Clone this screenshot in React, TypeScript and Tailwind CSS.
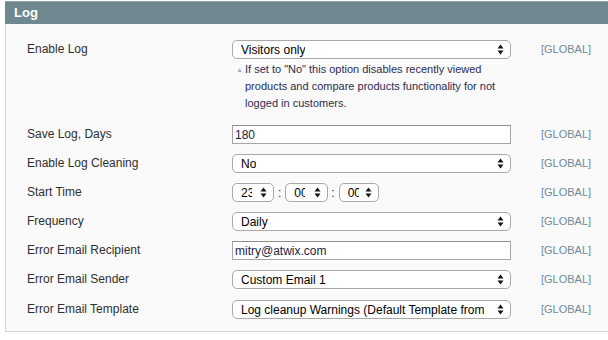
import React from "react";

const font = { fontFamily: '"Liberation Sans", Arial, sans-serif' };

function Arrows() {
  return (
    <svg width="7" height="11" viewBox="0 0 7 11" className="shrink-0">
      <path d="M3.5 0.5 L6.5 4.5 L0.5 4.5 Z" fill="#111" />
      <path d="M3.5 10.5 L6.5 6.5 L0.5 6.5 Z" fill="#111" />
    </svg>
  );
}

function Select({ value }: { value: string }) {
  return (
    <div className="flex h-[19px] w-[279px] items-center justify-between rounded-[5px] border border-[#a9a9a9] bg-white pl-[8px] pr-[6px] text-[12px] text-black">
      <span className="truncate">{value}</span>
      <Arrows />
    </div>
  );
}

function TimeSelect({ value, box }: { value: string; box: string }) {
  return (
    <div className={"flex h-[19px] items-center justify-between rounded-[5px] border border-[#a9a9a9] bg-white pl-[8px] pr-[6px] text-[12px] text-black " + box}>
      <span className="w-[11px] overflow-hidden whitespace-nowrap">{value}</span>
      <Arrows />
    </div>
  );
}

function Input({ value }: { value: string }) {
  return (
    <div className="flex h-[19px] w-[279px] items-center border border-[#a6a6a6] border-t-[#8f8f8f] bg-white px-[2px] text-[12px] text-[#1d1d3f]">
      {value}
    </div>
  );
}

function Row({ label, children }: { label: string; children: React.ReactNode }) {
  return (
    <div className="flex items-start py-[5px]">
      <div className="w-[205px] h-[19px] leading-[19px] text-[12px] text-[#2f2f2f]">{label}</div>
      <div className="w-[279px]">{children}</div>
      <div className="ml-[30px] h-[19px] leading-[19px] text-[11px] text-[#6f8a98]">[GLOBAL]</div>
    </div>
  );
}

export default function App() {
  return (
    <div className="w-[608px] h-[340px] bg-white" style={font}>
      <div className="ml-[5px] pt-[1px]">
        <div className="h-[23px] bg-[#6f878f] border-t border-[#8fa3aa] pl-[9px] leading-[21px] text-[13px] font-bold text-white">
          Log
        </div>
        <div className="h-[308px] border-l border-b border-[#d3d3d3] bg-[#fafafa] pl-[21px] pt-[11px]">
          <Row label="Enable Log">
            <Select value="Visitors only" />
            <div className="mt-[2px] mb-[3px] flex pl-[4px] text-[11px] leading-[17px] text-[#2c2c50]">
              <span className="mr-[2px] w-[7px] shrink-0 text-[7px] text-[#a7b2b8]">▲</span>
              <span>
                If set to "No" this option disables recently viewed products and compare products functionality for not
                logged in customers.
              </span>
            </div>
          </Row>
          <Row label="Save Log, Days">
            <Input value="180" />
          </Row>
          <Row label="Enable Log Cleaning">
            <Select value="No" />
          </Row>
          <Row label="Start Time">
            <div className="flex items-center">
              <TimeSelect value="23" box="w-[42px]" />
              <span className="ml-[4px] mr-[4px] text-[12px] text-[#2f2f2f]">:</span>
              <TimeSelect value="00" box="w-[43px]" />
              <span className="ml-[3px] mr-[4px] text-[12px] text-[#2f2f2f]">:</span>
              <TimeSelect value="00" box="w-[40px]" />
            </div>
          </Row>
          <Row label="Frequency">
            <Select value="Daily" />
          </Row>
          <Row label="Error Email Recipient">
            <Input value="mitry@atwix.com" />
          </Row>
          <Row label="Error Email Sender">
            <Select value="Custom Email 1" />
          </Row>
          <div className="pt-[1px]">
            <Row label="Error Email Template">
              <Select value="Log cleanup Warnings (Default Template from" />
            </Row>
          </div>
        </div>
      </div>
    </div>
  );
}
